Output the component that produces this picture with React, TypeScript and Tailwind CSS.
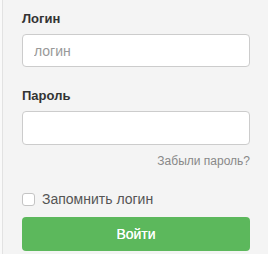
import { useState } from 'react';

export default function App() {
  const [remember, setRemember] = useState(false);

  return (
    <div className="w-full h-[254px] bg-[#f9f9f9] font-['Liberation_Sans',Arial,sans-serif]">
      <div className="ml-[2px] h-full border-l border-[#e2e2e2] bg-[#f4f4f4] pl-[19px] pr-[18px] pt-[9px]">
        <label className="block text-[13px] font-bold leading-[20px] text-[#333]">Логин</label>
        <input
          type="text"
          placeholder="логин"
          className="mt-[5px] block h-[33px] w-full rounded-[4px] border border-[#cccccc] bg-white px-[11px] text-[14px] text-[#555] placeholder:text-[#999] outline-none"
        />

        <label className="mt-[19px] block text-[13px] font-bold leading-[20px] text-[#333]">Пароль</label>
        <input
          type="password"
          className="mt-[5px] block h-[34px] w-full rounded-[4px] border border-[#cccccc] bg-white px-[11px] text-[14px] outline-none"
        />
        <div className="mt-[8px] flex justify-end">
          <a className="text-[12px] leading-[16px] text-[#888]">Забыли пароль?</a>
        </div>

        <label className="mt-[22px] flex items-center gap-[7px] text-[14px] leading-[16px] text-[#555]">
          <input
            type="checkbox"
            checked={remember}
            onChange={(e) => setRemember(e.target.checked)}
            className="m-0 h-[13px] w-[13px] appearance-none rounded-[3px] border border-[#c4c4c4] bg-white checked:bg-[#5cb85c]"
          />
          Запомнить логин
        </label>

        <button className="mt-[10px] block h-[34px] w-full rounded-[4px] bg-[#5cb85c] text-[14px] text-white [text-shadow:0_0_0.4px_#fff]">
          Войти
        </button>
      </div>
    </div>
  );
}
